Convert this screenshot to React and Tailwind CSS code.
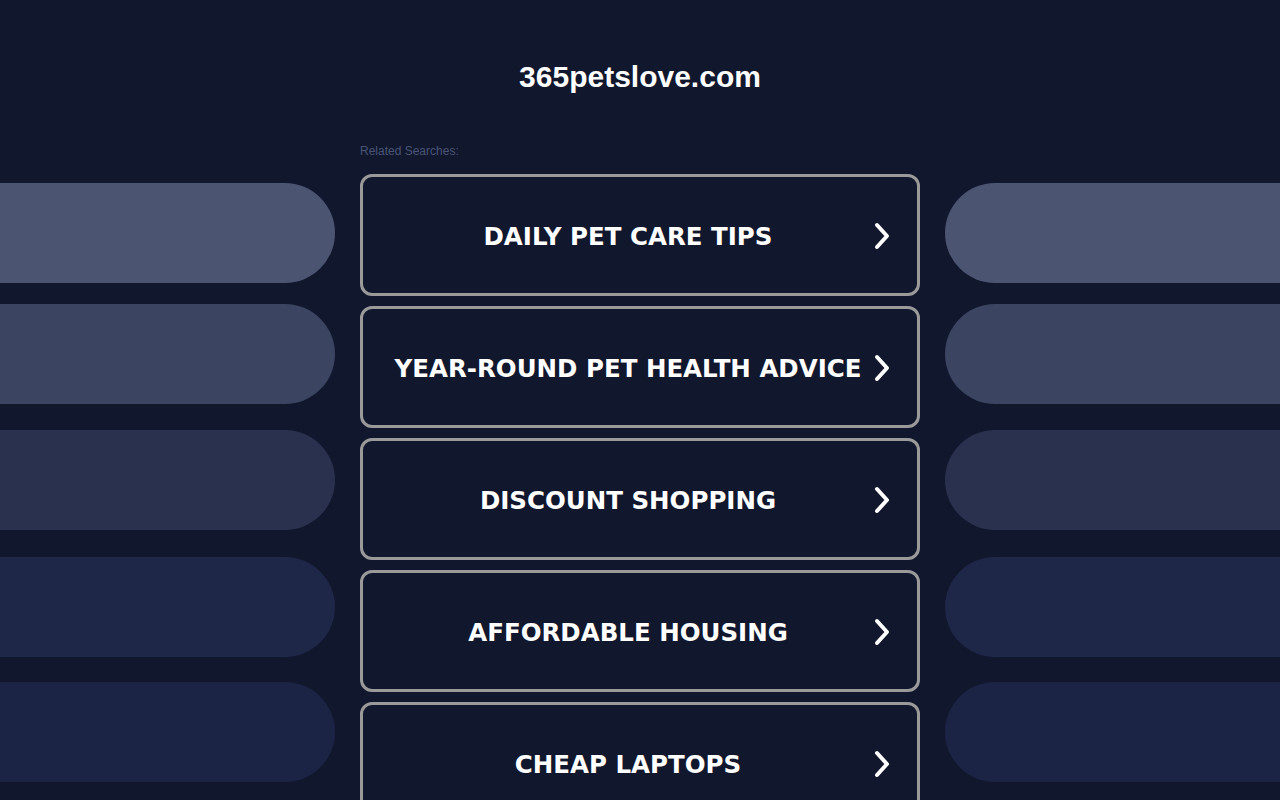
import React from 'react';

const LINKS = [
  'DAILY PET CARE TIPS',
  'YEAR-ROUND PET HEALTH ADVICE',
  'DISCOUNT SHOPPING',
  'AFFORDABLE HOUSING',
  'CHEAP LAPTOPS',
];

// side pills: spacing is not regular in the original
const PILLS = [
  { mt: 'mt-[183px]', bg: 'bg-[#4b5572]' },
  { mt: 'mt-[21px]', bg: 'bg-[#3b4562]' },
  { mt: 'mt-[26px]', bg: 'bg-[#29314f]' },
  { mt: 'mt-[27px]', bg: 'bg-[#1f2748]' },
  { mt: 'mt-[25px]', bg: 'bg-[#1c2445]' },
];

function Chevron() {
  return (
    <svg width="18" height="28" viewBox="0 0 18 28" fill="none" className="mt-[2px]">
      <path d="M4 3 L14 14 L4 25" stroke="#fff" strokeWidth="4" strokeLinecap="round" strokeLinejoin="round" />
    </svg>
  );
}

function SidePills({ side }) {
  return (
    <div className="w-[335px] shrink-0 flex flex-col">
      {PILLS.map((p, i) => (
        <div
          key={i}
          className={`h-[100px] ${p.mt} ${p.bg} ${side === 'left' ? 'rounded-r-[50px]' : 'rounded-l-[50px]'}`}
        />
      ))}
    </div>
  );
}

export default function App() {
  return (
    <div className="h-[800px] overflow-hidden bg-[#11172d] flex gap-[25px]">
      <SidePills side="left" />

      <div className="w-[560px] shrink-0 flex flex-col">
        <h1
          className="mt-[57px] h-[40px] leading-[40px] text-center text-white font-bold text-[30px]"
          style={{ fontFamily: '"Liberation Sans", Arial, sans-serif' }}
        >
          365petslove.com
        </h1>
        <div
          className="mt-[46px] h-[16px] leading-[16px] text-[12px] text-[#4a5577]"
          style={{ fontFamily: '"Liberation Sans", Arial, sans-serif' }}
        >
          Related Searches:
        </div>

        <div className="mt-[15px] flex flex-col gap-[10px]">
          {LINKS.map((label) => (
            <a
              key={label}
              href="#"
              className="h-[122px] shrink-0 border-[3px] border-[#9a9a9a] rounded-[12px] flex items-center pl-[20px] pr-[26px]"
            >
              <span
                className="flex-1 text-center text-white font-bold text-[24.5px] mt-[4px] whitespace-nowrap"
                style={{ fontFamily: '"DejaVu Sans", Verdana, sans-serif' }}
              >
                {label}
              </span>
              <Chevron />
            </a>
          ))}
        </div>
      </div>

      <SidePills side="right" />
    </div>
  );
}
